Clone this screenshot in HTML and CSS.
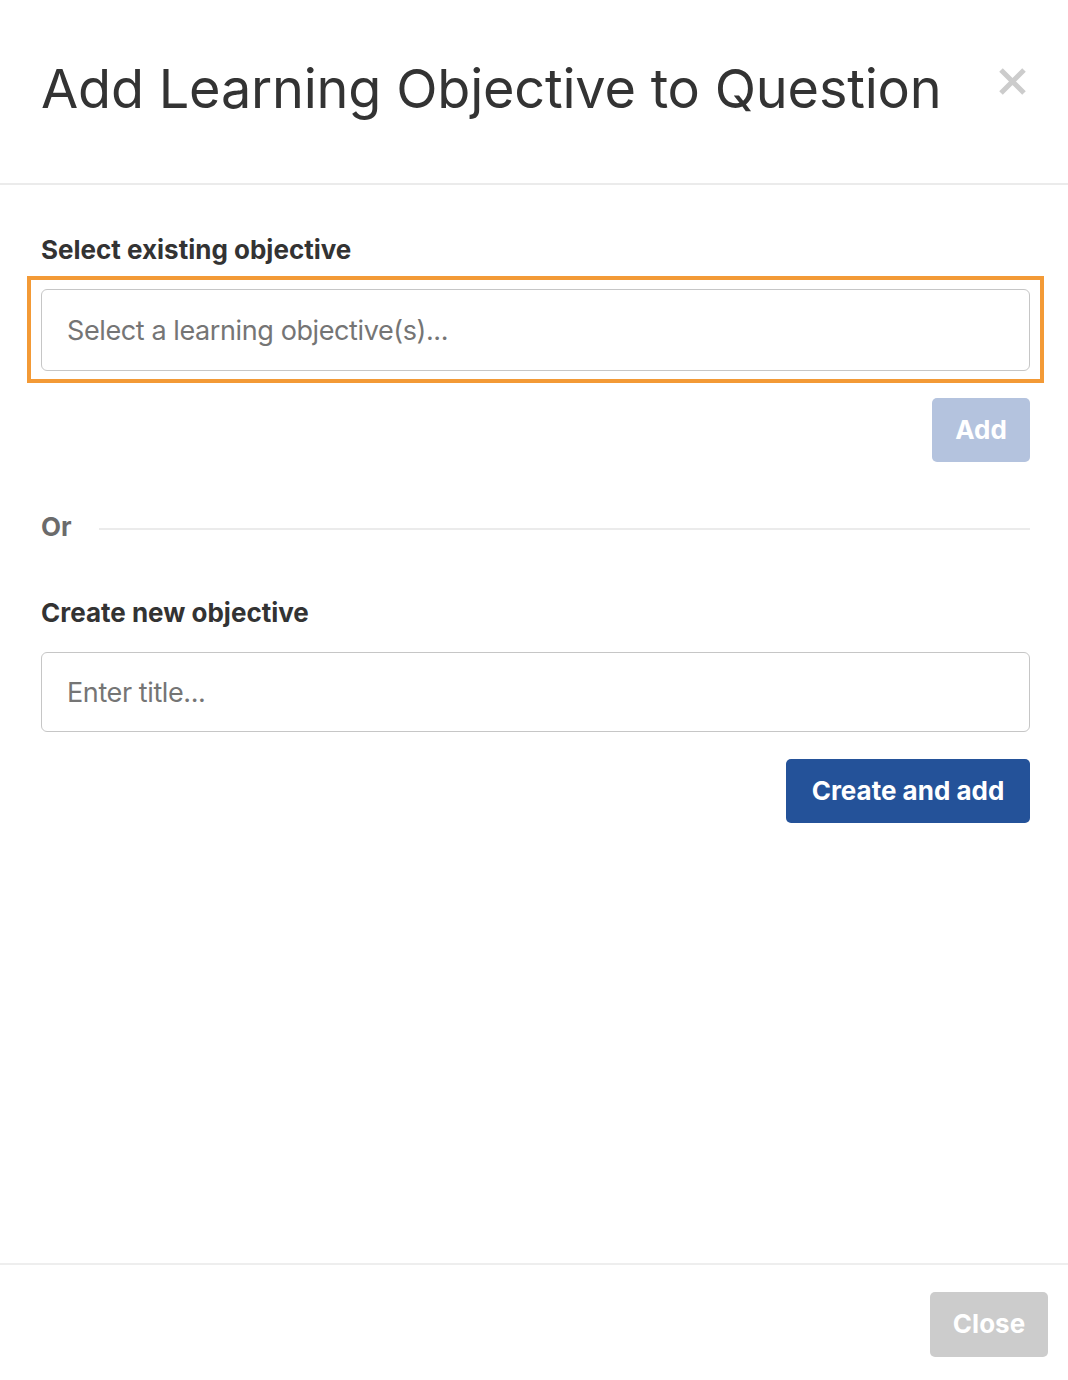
FILE: index.html
```html
<!DOCTYPE html>
<html>
<head>
<meta charset="utf-8">
<link rel="stylesheet" href="styles.css">
</head>
<body>
<div class="modal">
  <header class="modal-header">
    <h1 class="modal-title">Add Learning Objective to Question</h1>
    <button class="close-x" aria-label="Close">
      <svg width="27" height="27" viewBox="0 0 27 27"><path d="M2 2 L25 25 M25 2 L2 25" stroke="#cccccc" stroke-width="5"/></svg>
    </button>
  </header>
  <main class="modal-body">
    <label class="field-label">Select existing objective</label>
    <div class="focus-ring">
      <div class="input">Select a learning objective(s)...</div>
    </div>
    <div class="actions actions-add">
      <button class="btn btn-disabled">Add</button>
    </div>
    <div class="divider">
      <span class="or">Or</span>
      <span class="rule"></span>
    </div>
    <label class="field-label second">Create new objective</label>
    <div class="input plain">Enter title...</div>
    <div class="actions actions-create">
      <button class="btn btn-primary">Create and add</button>
    </div>
  </main>
  <footer class="modal-footer">
    <button class="btn btn-close">Close</button>
  </footer>
</div>
</body>
</html>
```

FILE: styles.css
```css
* { box-sizing: border-box; }
html, body { margin: 0; padding: 0; background: #fff; }
body {
  font-family: "Inter", "Open Sans", "Liberation Sans", sans-serif;
  color: #333;
}
.modal {
  width: 1068px;
  height: 1380px;
  display: flex;
  flex-direction: column;
}
.modal-header {
  height: 185px;
  flex: none;
  border-bottom: 2px solid #ebebeb;
  display: flex;
  justify-content: space-between;
  align-items: flex-start;
  padding: 57px 42px 0 41px;
}
.modal-title {
  margin: 0;
  font-size: 54px;
  font-weight: 400;
  line-height: 64px;
  color: #333;
  letter-spacing: -0.2px;
  white-space: nowrap;
}
.close-x {
  border: 0;
  background: none;
  padding: 0;
  margin-top: 11px;
  width: 27px;
  height: 27px;
  cursor: pointer;
}
.close-x svg { display: block; }
.modal-body {
  flex: 1;
  padding: 49px 38px 0 41px;
}
.field-label {
  display: block;
  font-size: 26px;
  font-weight: 700;
  line-height: 32px;
  color: #333;
  margin-bottom: 10px;
}
.field-label.second { margin-top: 54px; margin-bottom: 23px; }
.focus-ring {
  margin: 0 -14px;
  border: 4px solid #f39a36;
  padding: 9px 10px 8px;
}
.input {
  height: 82px;
  border: 1px solid #c6c6c6;
  border-radius: 6px;
  padding: 0 25px;
  display: flex;
  align-items: center;
  font-size: 27px;
  letter-spacing: -0.4px;
  color: #757575;
  background: #fff;
}
.input.plain { height: 80px; }
.actions {
  display: flex;
  justify-content: flex-end;
}
.actions-add { margin-top: 15px; }
.actions-create { margin-top: 27px; }
.btn {
  border: 0;
  border-radius: 5px;
  font-family: inherit;
  font-size: 26px;
  font-weight: 700;
  color: #fff;
  height: 64px;
  padding: 0 0 2px;
  cursor: pointer;
}
.btn-disabled { background: #b4c3de; width: 98px; }
.btn-primary { background: #245299; width: 244px; }
.divider {
  display: flex;
  align-items: flex-start;
  margin-top: 49px;
  height: 32px;
}
.or {
  font-size: 26px;
  font-weight: 700;
  line-height: 32px;
  color: #6b6b6b;
  margin-right: 27px;
}
.rule {
  flex: 1;
  height: 2px;
  margin-top: 17px;
  background: #ebebeb;
}
.modal-footer {
  flex: none;
  border-top: 2px solid #eeeeee;
  height: 117px;
  display: flex;
  justify-content: flex-end;
  align-items: flex-start;
  padding: 27px 20px 0 0;
}
.btn-close { background: #cccccc; width: 118px; height: 65px; }
```
